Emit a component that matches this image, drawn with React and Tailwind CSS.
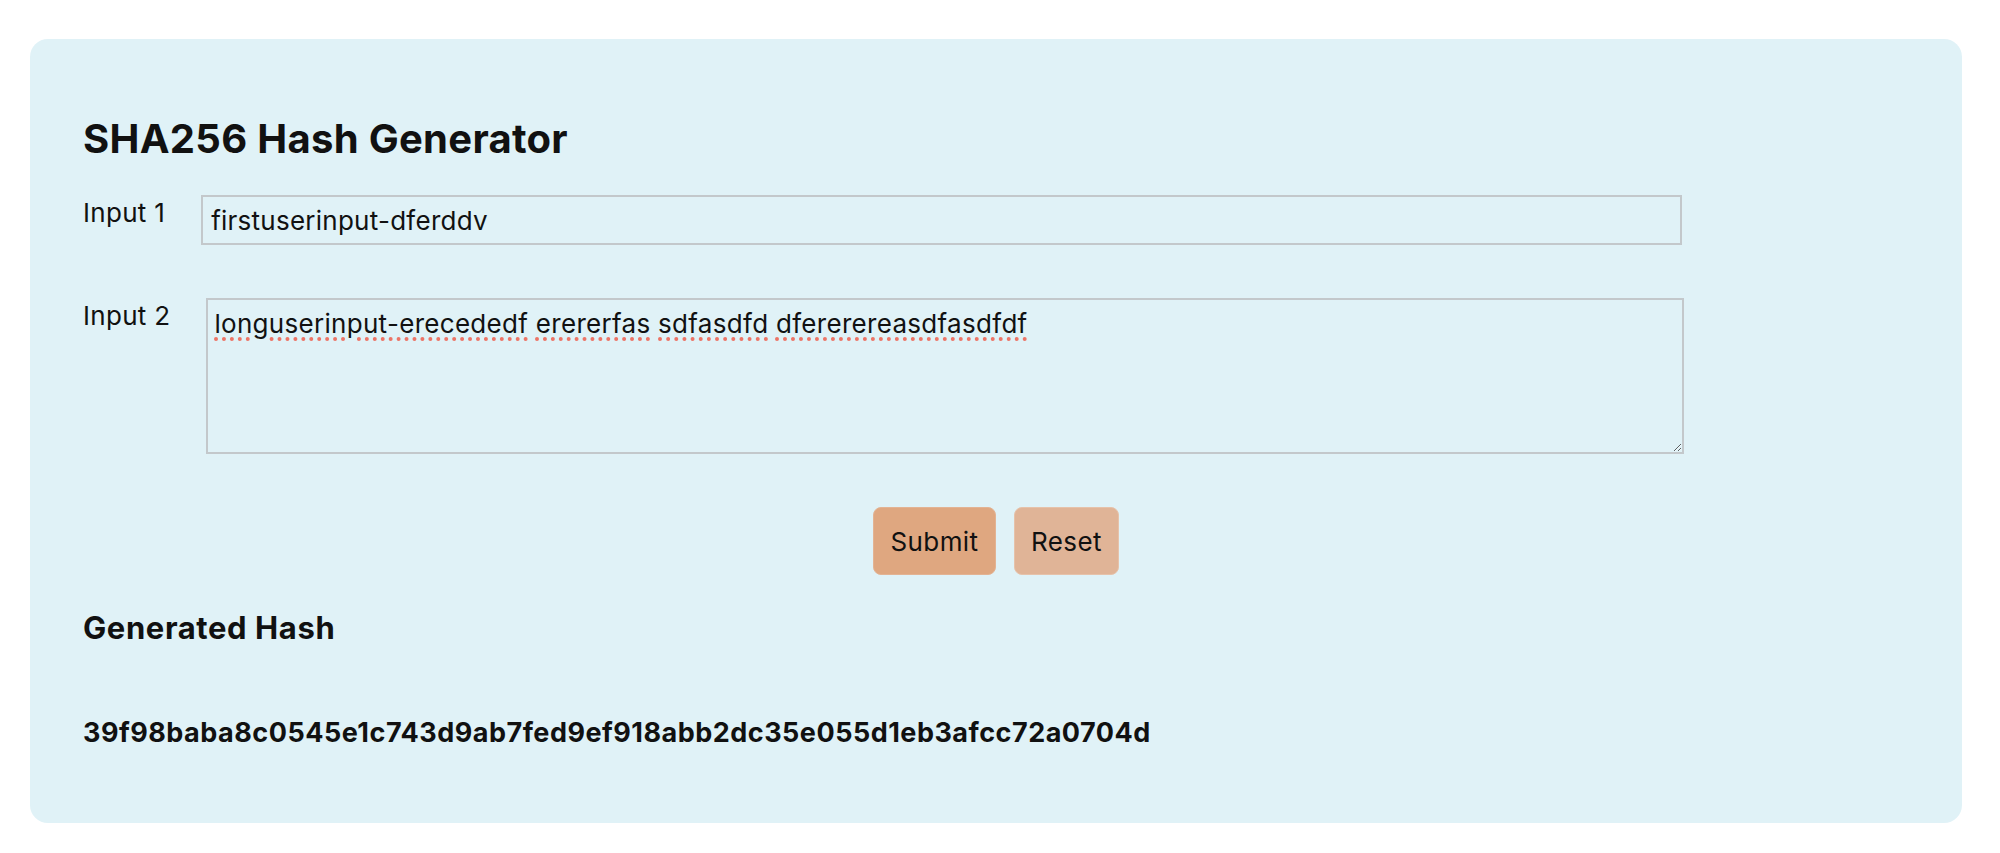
import React from "react";

function Bad({ children }) {
  return (
    <span className="underline decoration-dotted decoration-[#ec7466] decoration-[4px] underline-offset-[4px]">
      {children}
    </span>
  );
}

export default function App() {
  return (
    <div
      className="min-h-screen bg-white pt-[39px] pl-[30px] text-[#111111]"
      style={{ fontFamily: "Inter, 'Noto Sans', sans-serif" }}
    >
      <div className="w-[1932px] rounded-[18px] bg-[#e0f2f7] px-[53px] pt-[73px] pb-[75px]">
        <h2 className="mt-[3px] text-[40px] font-bold leading-[48px] tracking-[0.3px]">SHA256 Hash Generator</h2>

        <div className="mt-[32px] flex items-start gap-[36px]">
          <label className="mt-[2px] text-[26px] leading-[31px] tracking-[0.3px]">Input 1</label>
          <div className="flex h-[50px] w-[1481px] items-center border-2 border-[#c3c8cb] px-[8px] text-[26px] leading-[31px] tracking-[0.25px]">
            firstuserinput-dferddv
          </div>
        </div>

        <div className="mt-[53px] flex items-start gap-[36px]">
          <label className="mt-[2px] text-[26px] leading-[31px] tracking-[0.3px]">Input 2</label>
          <div className="h-[156px] w-[1478px] resize overflow-auto border-2 border-[#c3c8cb] px-[6px] pt-[8px] text-[26px] leading-[31px] tracking-[0.3px]">
            <Bad>longuserinput-erecededf</Bad> <Bad>erererfas</Bad> <Bad>sdfasdfd</Bad>{" "}
            <Bad>dfererereasdfasdfdf</Bad>
          </div>
        </div>

        <div className="mt-[53px] flex justify-center gap-[18px]">
          <button className="flex h-[68px] w-[123px] items-center justify-center rounded-[8px] border border-[#e3b393] bg-[#dfa780] text-[26px] leading-[31px] tracking-[0.4px] text-[#111111]">
            Submit
          </button>
          <button className="flex h-[68px] w-[105px] items-center justify-center rounded-[8px] border border-[#e6c2aa] bg-[#e0b497] text-[26px] leading-[31px] tracking-[0.4px] text-[#111111]">
            Reset
          </button>
        </div>

        <h3 className="mt-[34px] text-[31px] font-bold leading-[37px] tracking-[0.6px]">Generated Hash</h3>

        <p className="mt-[71px] text-[27px] font-bold leading-[31px] tracking-[0.5px]">
          39f98baba8c0545e1c743d9ab7fed9ef918abb2dc35e055d1eb3afcc72a0704d
        </p>
      </div>
    </div>
  );
}
